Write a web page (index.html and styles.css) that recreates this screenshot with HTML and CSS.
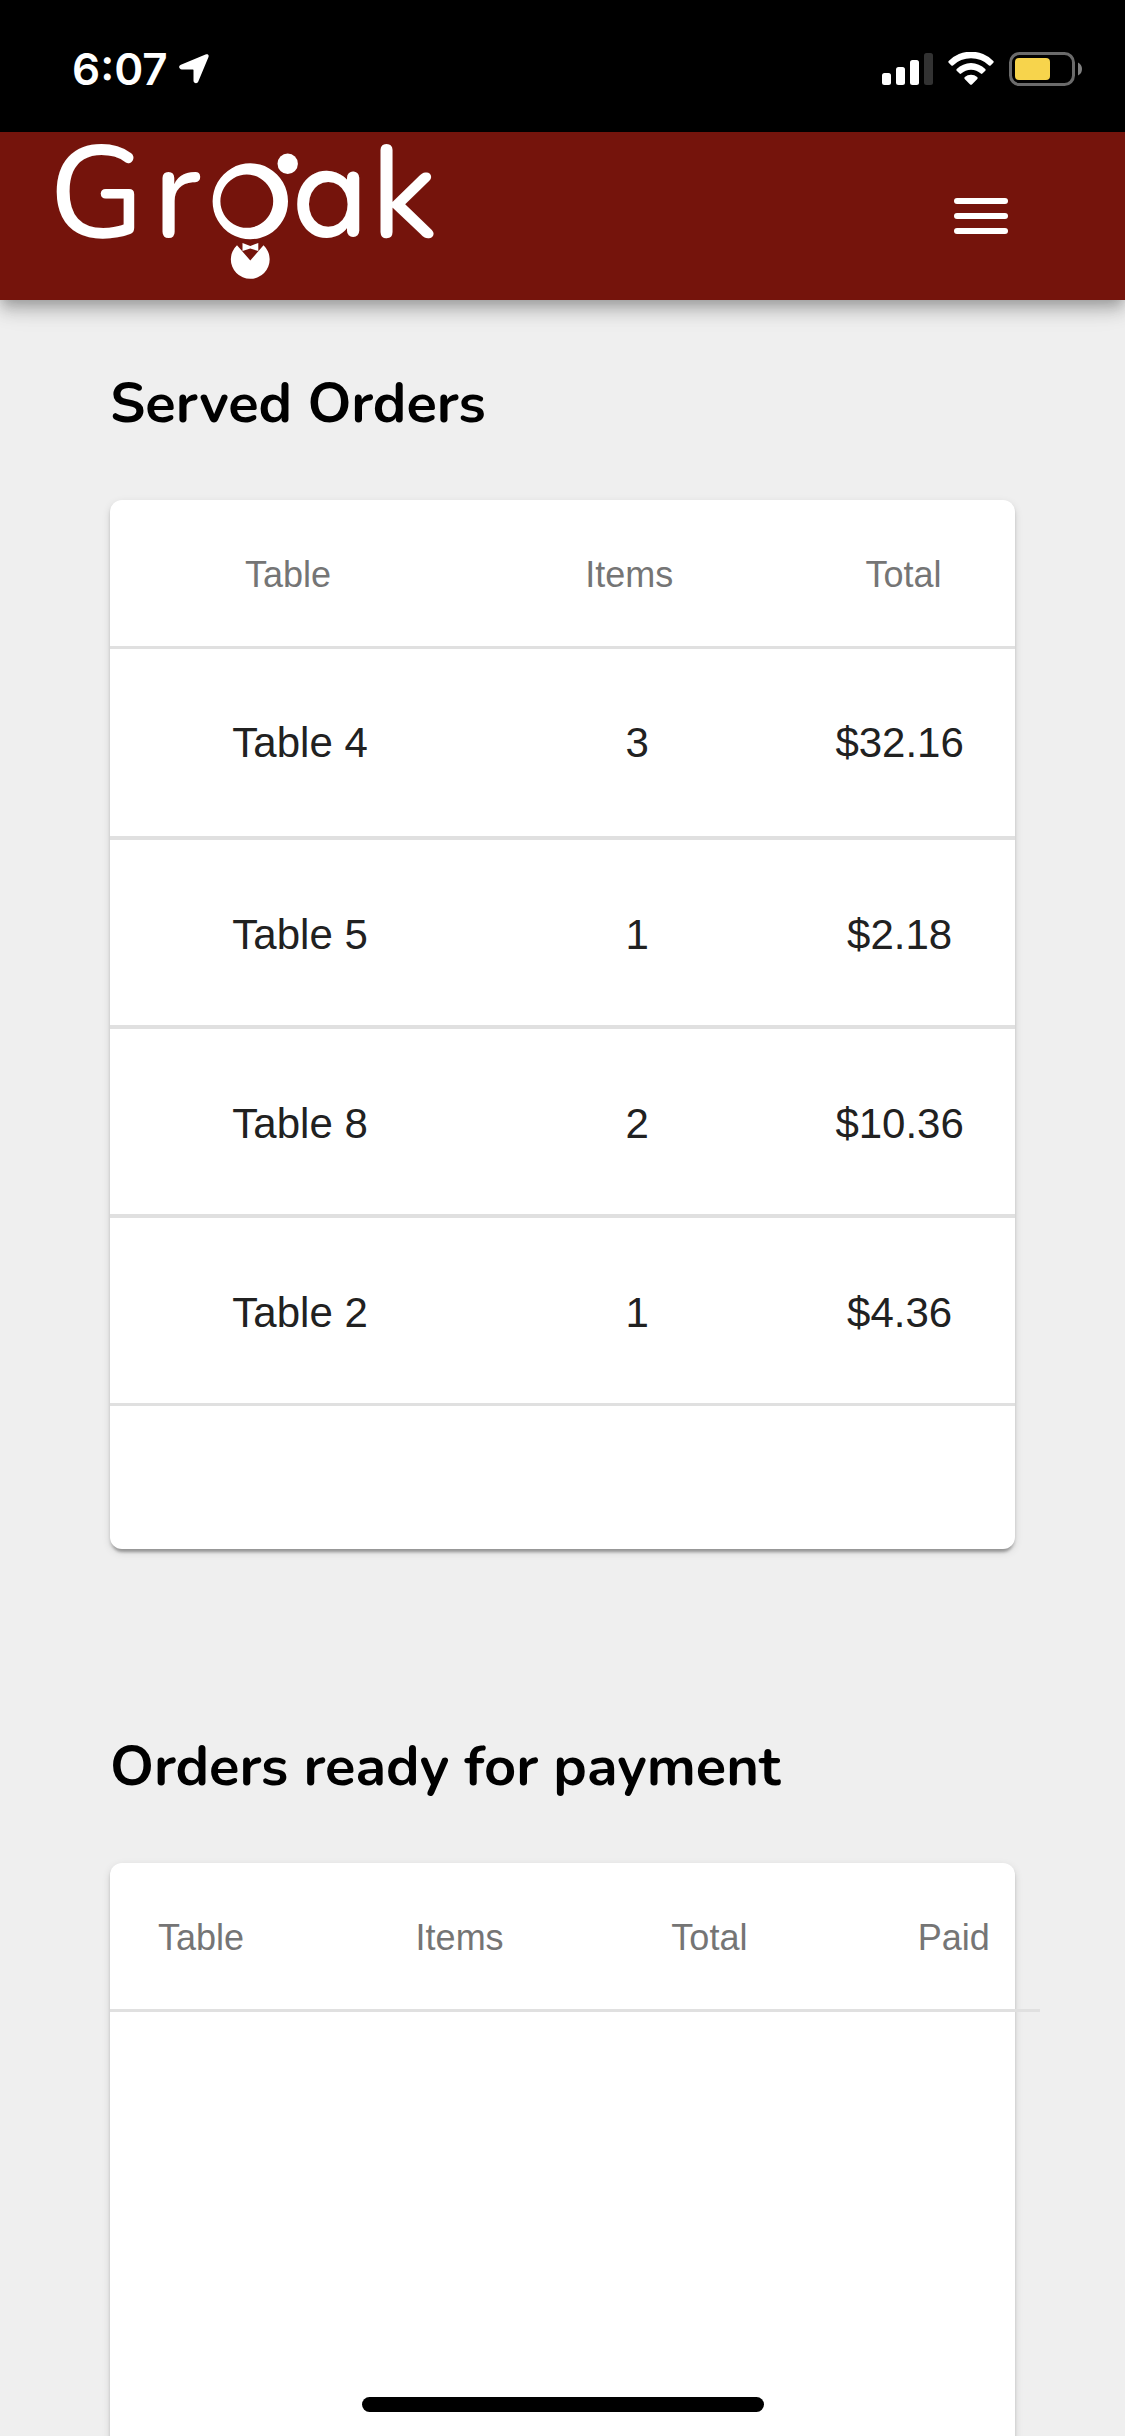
FILE: index.html
```html
<!DOCTYPE html>
<html lang="en">
<head>
<meta charset="utf-8">
<meta name="viewport" content="width=device-width, initial-scale=1">
<title>Groak</title>
<link rel="stylesheet" href="styles.css">
</head>
<body>
<div class="screen">
  <div class="status-bar">
    <div class="status-left">
      <span class="clock">6:07</span>
      <svg class="icon" width="30" height="30" viewBox="0 0 30 30" aria-hidden="true">
        <path d="M26.500 .5C28.800 -.4 30.300 1 29.400 3.200L19.300 27.600C18.300 30.200 14.500 29.500 14.500 26.700V16C14.500 15.600 14.300 15.400 13.900 15.400H2.900C-.2 15.400 -.9 11.900 1.900 10.700Z" fill="#fff"/>
      </svg>
    </div>
    <div class="status-right">
      <svg class="icon" width="51" height="34" viewBox="0 0 51 34" aria-hidden="true">
        <g fill="#fff"><rect x="0" y="21" width="9" height="12" rx="2.500"/><rect x="14" y="15" width="9" height="18" rx="2.500"/><rect x="28" y="8" width="9" height="25" rx="2.500"/></g>
        <rect x="42" y="1" width="9" height="32" rx="2.500" fill="#323232"/>
      </svg>
      <svg class="icon" width="46" height="34" viewBox="0 0 46 34" aria-hidden="true">
        <g fill="#fff">
          <path d="M.7 8.900A31.500 31.500 0 0 1 45.300 8.900Q46.200 9.800 45.300 10.700L42.600 13.500Q41.900 14.200 41 13.400A26 26 0 0 0 5 13.400Q4.100 14.200 3.400 13.500L.7 10.700Q-.2 9.800 .7 8.900Z"/>
          <path d="M8.700 17A20.300 20.300 0 0 1 37.300 17Q38.200 17.900 37.300 18.800L34.400 21.600Q33.600 22.300 32.800 21.600A14.500 14.500 0 0 0 13.200 21.600Q12.400 22.300 11.600 21.600L8.700 18.800Q7.800 17.900 8.700 17Z"/>
          <path d="M16.800 25.100A9.300 9.300 0 0 1 29.200 25.100Q30.200 26 29.300 26.900L23.900 32.400Q23 33.300 22.100 32.400L16.700 26.900Q15.800 26 16.800 25.100Z"/>
        </g>
      </svg>
      <svg class="icon" width="73" height="34" viewBox="0 0 73 34" aria-hidden="true">
        <rect x="1.500" y="1.500" width="63" height="31" rx="9" fill="none" stroke="#6b6b6b" stroke-width="3"/>
        <rect x="6" y="6" width="35" height="22" rx="4" fill="#f7d44c"/>
        <path d="M69 10.500Q73 12.500 73 17T69 23.500Z" fill="#808080"/>
      </svg>
    </div>
  </div>

  <header class="navbar">
    <a class="brand" href="#" aria-label="Groak">
      <svg class="icon logo" width="390" height="168" viewBox="50 132 390 168">
        <g class="wordmark">
          <text x="49" y="237">G</text>
          <text x="153" y="237">r</text>
          <text class="round" x="292" y="237">a</text>
          <text x="371" y="237">k</text>
        </g>
        <g fill="#fff">
          <path fill-rule="evenodd" d="M250.300 163.300a37.700 38 0 1 0 .01 0ZM246.800 174.600a26.400 26.600 0 1 1-.01 0Z"/>
          <circle cx="287.700" cy="163.700" r="10.200"/>
          <path d="M237 245.300L250.300 260.500L263.500 245.300A19.400 19.400 0 1 1 237 245.300Z"/>
          <path d="M242.500 243L250.300 246L258.300 243V251L250.300 248.500L242.500 251Z"/>
        </g>
      </svg>
    </a>
    <button class="menu-button" type="button" aria-label="Open menu">
      <svg class="icon" width="54" height="36" viewBox="0 0 54 36" aria-hidden="true">
        <g fill="#fff"><rect width="54" height="6" rx="3"/><rect y="15" width="54" height="6" rx="3"/><rect y="30" width="54" height="6" rx="3"/></g>
      </svg>
    </button>
  </header>

  <main class="content">
    <section class="orders">
      <h2>Served Orders</h2>
      <div class="card">
        <table class="served">
          <thead>
            <tr><th scope="col">Table</th><th scope="col">Items</th><th scope="col">Total</th></tr>
          </thead>
          <tbody>
            <tr><td>Table 4</td><td>3</td><td>$32.16</td></tr>
            <tr><td>Table 5</td><td>1</td><td>$2.18</td></tr>
            <tr><td>Table 8</td><td>2</td><td>$10.36</td></tr>
            <tr><td>Table 2</td><td>1</td><td>$4.36</td></tr>
          </tbody>
        </table>
      </div>
    </section>
    <section class="orders">
      <h2>Orders ready for payment</h2>
      <div class="card card-tall">
        <table class="ready">
          <thead>
            <tr><th scope="col">Table</th><th scope="col">Items</th><th scope="col">Total</th><th scope="col">Paid</th></tr>
          </thead>
        </table>
      </div>
    </section>
  </main>
  <div class="home-indicator"></div>
</div>
</body>
</html>
```
FILE: styles.css
```css
* {
  box-sizing: border-box;
}

body {
  margin: 0;
  background: #efefef;
  color: #212121;
  font-family: "Liberation Sans", Arial, sans-serif;
}

.icon {
  display: block;
  flex: none;
}

.screen {
  display: flex;
  flex-direction: column;
  height: 100vh;
  overflow: hidden;
}

/* Status bar */
.status-bar {
  display: flex;
  flex: none;
  align-items: center;
  justify-content: space-between;
  height: 132px;
  padding: 6px 43px 0 72px;
  background: #000;
  color: #fff;
}

.status-left {
  display: flex;
  align-items: center;
  gap: 11px;
}

.clock {
  font: 600 44px/52px Inter, sans-serif;
}

.status-right {
  display: flex;
  align-items: center;
  gap: 15px;
}

/* App bar */
.navbar {
  position: relative;
  display: flex;
  flex: none;
  align-items: center;
  justify-content: space-between;
  height: 168px;
  padding: 0 117px 0 50px;
  background: #75140c;
  box-shadow: 0 6px 12px -3px rgba(0, 0, 0, 0.2),
    0 12px 15px 0 rgba(0, 0, 0, 0.14),
    0 3px 30px 0 rgba(0, 0, 0, 0.12);
}

.logo {
  overflow: visible;
}

.wordmark {
  fill: #fff;
  font: 500 131px Nunito, Lato, sans-serif;
}

.wordmark .round {
  font: 600 122px Quicksand, Inter, sans-serif;
  font-feature-settings: "cv11";
}

.menu-button {
  padding: 0;
  border: 0;
  background: none;
}

/* Content */
.content {
  flex: 1;
  min-height: 0;
  padding: 64px 110px 0;
}

.orders {
  margin-bottom: 178px;
}

h2 {
  margin: 0 0 56px;
  color: #000;
  font: 700 56px/80px Nunito, Lato, sans-serif;
}

.card {
  padding-bottom: 143px;
  border-radius: 12px;
  background: #fff;
  box-shadow: 0 6px 3px -3px rgba(0, 0, 0, 0.2),
    0 3px 3px 0 rgba(0, 0, 0, 0.14),
    0 3px 9px 0 rgba(0, 0, 0, 0.12);
}

.card-tall {
  min-height: 1049px;
}

table {
  width: 100%;
  border-spacing: 0;
  table-layout: fixed;
}

th {
  height: 149px;
  padding: 4px 0 0;
  border-bottom: 3px solid #e0e0e0;
  color: #757575;
  font-size: 36px;
  font-weight: 400;
  line-height: 72px;
}

td {
  height: 189px;
  padding: 4px 0 0;
  border-bottom: 4px solid #e0e0e0;
  font-size: 42px;
  line-height: 60px;
  text-align: center;
}

.served th:nth-child(1) {
  width: 42%;
  padding-right: 24px;
}

.served th:nth-child(2) {
  width: 32.5%;
  padding-right: 16px;
}

.served th:nth-child(3) {
  padding-left: 8px;
}

.served tbody tr:first-child td {
  height: 191px;
  padding-top: 0;
}

.served tbody tr:last-child td {
  height: 188px;
  border-bottom-width: 3px;
}

/* The four-column header is wider than its card */
.ready {
  width: calc(100% + 25px);
}

.ready th {
  padding-left: 48px;
  text-align: left;
}

.ready th:nth-child(1) {
  width: 27.7%;
}

.ready th:nth-child(2) {
  width: 27.5%;
}

.ready th:nth-child(3) {
  width: 26.5%;
}

.home-indicator {
  position: fixed;
  bottom: 24px;
  left: 50%;
  width: 402px;
  height: 15px;
  margin-left: -201px;
  border-radius: 8px;
  background: #000;
}
```
